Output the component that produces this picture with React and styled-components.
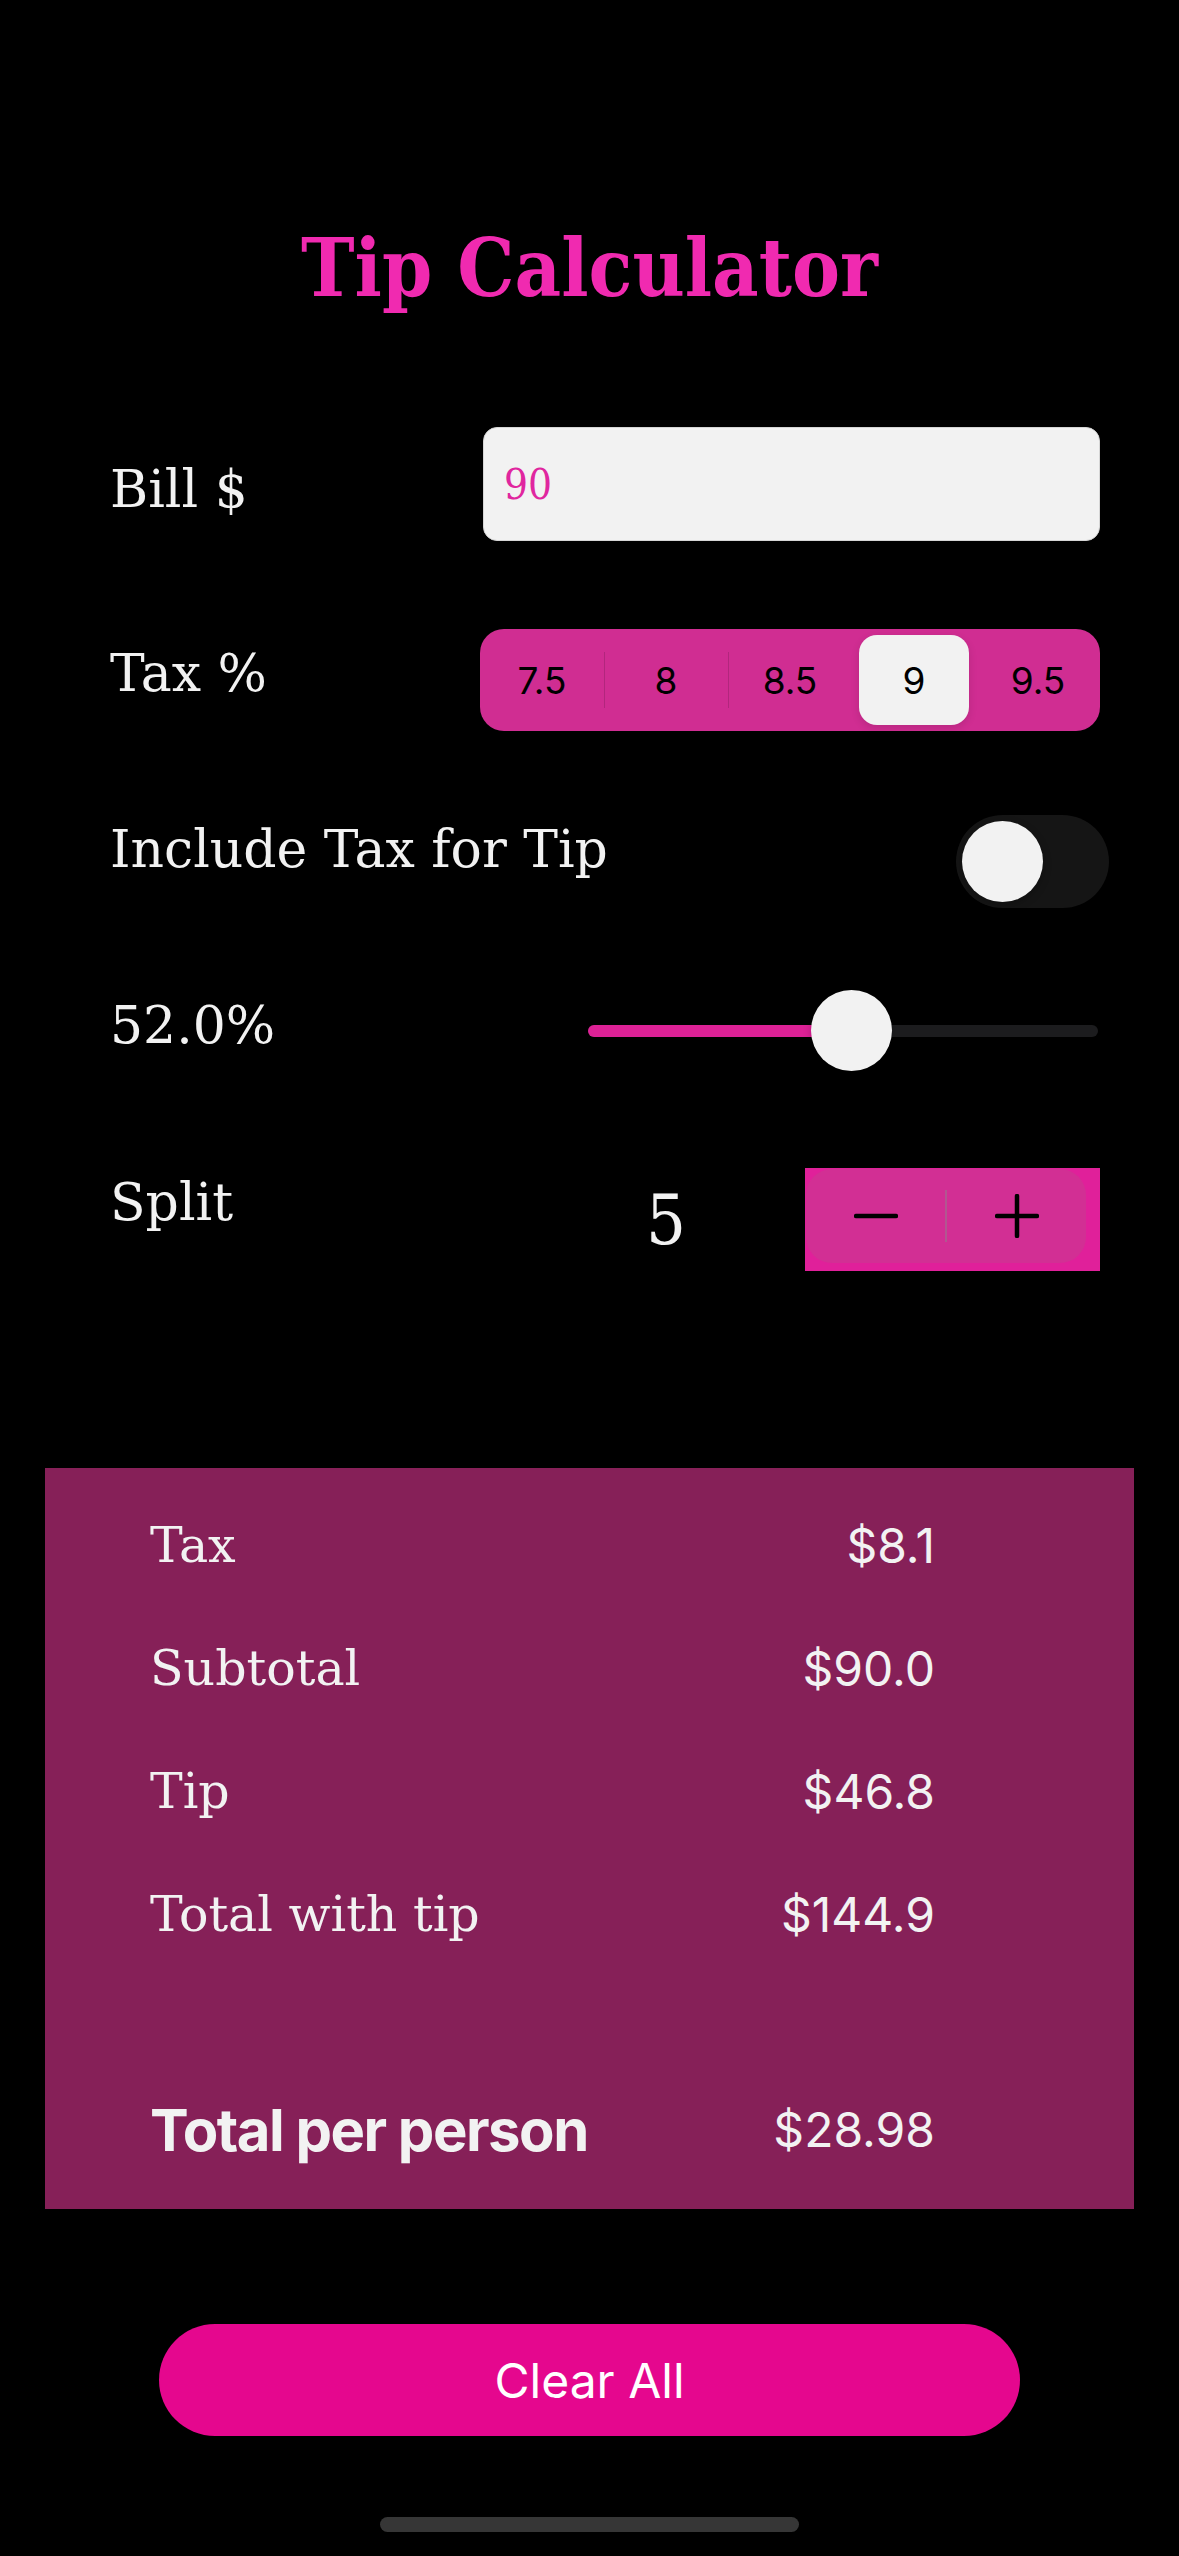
import React from "react";
import styled, { createGlobalStyle } from "styled-components";

const GlobalStyle = createGlobalStyle`
  html, body { margin: 0; padding: 0; background: #000; }
  #root { width: 1179px; min-height: 2556px; }
  * { box-sizing: border-box; }
`;

const TITLE_SERIF = `"DejaVu Serif Condensed", "DejaVu Serif", serif`;
const SERIF = `"DejaVu Serif", serif`;
const SANS = `Inter, "Noto Sans", sans-serif`;

const Page = styled.div`
  display: flex;
  flex-direction: column;
  width: 1179px;
  min-height: 2556px;
  background: #000;
`;

const Title = styled.h1`
  margin: 218px 0 0;
  font-family: ${TITLE_SERIF};
  font-stretch: condensed;
  font-weight: 700;
  font-size: 80px;
  line-height: 100px;
  color: #f02ab0;
  text-align: center;
`;

const Form = styled.div`
  display: flex;
  flex-direction: column;
  padding: 0 79px 0 110px;
`;

const Row = styled.div`
  display: flex;
  align-items: center;
  justify-content: space-between;
  height: ${(p) => p.$h}px;
  margin-top: ${(p) => p.$mt}px;
`;

const Label = styled.div`
  font-family: ${SERIF};
  font-size: 52px;
  line-height: 64px;
  color: #f2f2f2;
  padding-top: ${(p) => (p.$nudge > 0 ? p.$nudge * 2 : 0)}px;
  padding-bottom: ${(p) => (p.$nudge < 0 ? -p.$nudge * 2 : 0)}px;
`;

const BillInput = styled.input`
  width: 617px;
  height: 114px;
  border: 1px solid #d6d6d6;
  border-radius: 14px;
  background: #f2f2f2;
  padding: 0 0 0 20px;
  font-family: ${TITLE_SERIF};
  font-stretch: condensed;
  font-size: 42px;
  color: #e0269f;
  outline: none;
`;

const Segmented = styled.div`
  display: flex;
  width: 620px;
  height: 102px;
  border-radius: 24px;
  background: #d02d92;
`;

const Segment = styled.div`
  position: relative;
  flex: 1;
  display: flex;
  padding: 6px 7px;
  &::before {
    content: "";
    display: ${(p) => (p.$divider ? "block" : "none")};
    position: absolute;
    left: 0;
    top: 23px;
    bottom: 23px;
    width: 1px;
    background: rgba(0, 0, 0, 0.14);
  }
`;

const SegPill = styled.div`
  flex: 1;
  display: flex;
  align-items: center;
  justify-content: center;
  border-radius: 18px;
  background: ${(p) => (p.$active ? "#f2f2f2" : "transparent")};
  box-shadow: ${(p) => (p.$active ? "0 3px 8px rgba(0,0,0,0.12)" : "none")};
  font-family: ${SANS};
  font-size: 37px;
  color: #000;
`;

const Toggle = styled.div`
  display: flex;
  align-items: center;
  width: 153px;
  height: 93px;
  margin-right: -9px;
  border-radius: 47px;
  background: #151515;
  padding-left: 6px;
`;

const Knob = styled.div`
  width: 81px;
  height: 81px;
  border-radius: 50%;
  background: #f2f2f2;
  box-shadow: 0 3px 8px rgba(0, 0, 0, 0.25);
`;

const Slider = styled.div`
  position: relative;
  display: flex;
  align-items: center;
  width: 510px;
  height: 81px;
  margin-right: 2px;
`;

const Track = styled.div`
  flex: 1;
  height: 12px;
  border-radius: 6px;
  background: #1c1c1e;
  overflow: hidden;
`;

const Fill = styled.div`
  height: 100%;
  background: #dd2196;
`;

const Thumb = styled.div`
  position: absolute;
  top: 0;
  width: 81px;
  height: 81px;
  border-radius: 50%;
  background: #f2f2f2;
  box-shadow: 0 3px 8px rgba(0, 0, 0, 0.2);
`;

const SplitControls = styled.div`
  display: flex;
  align-items: center;
  gap: 119px;
`;

const SplitValue = styled.div`
  font-family: ${TITLE_SERIF};
  font-stretch: condensed;
  font-size: 70px;
  line-height: 80px;
  color: #f2f2f2;
`;

const Stepper = styled.div`
  display: flex;
  width: 295px;
  height: 103px;
  padding: 1px 14px 8px 1px;
  background: #e0209a;
`;

const StepperInner = styled.div`
  flex: 1;
  display: flex;
  align-items: center;
  border-radius: 26px;
  background: #d22f94;
`;

const StepButton = styled.div`
  flex: 1;
  display: flex;
  align-items: center;
  justify-content: center;
  height: 100%;
`;

const StepDivider = styled.div`
  width: 2px;
  height: 52px;
  background: rgba(150, 120, 140, 0.55);
`;

const Panel = styled.div`
  display: flex;
  flex-direction: column;
  margin: 197px 45px 0;
  height: 741px;
  padding: 16px 199px 18px 105px;
  background: #862058;
`;

const ResultRow = styled.div`
  display: flex;
  align-items: center;
  justify-content: space-between;
  height: 123px;
  margin-top: ${(p) => p.$mt || 0}px;
`;

const ResultLabel = styled.div`
  font-family: ${SERIF};
  font-size: 49px;
  line-height: 60px;
  color: #f2f2f2;
`;

const TotalLabel = styled.div`
  font-family: ${SANS};
  font-weight: 700;
  font-size: 58px;
  line-height: 60px;
  letter-spacing: -1.5px;
  color: #f2f2f2;
`;

const ResultValue = styled.div`
  font-family: ${SANS};
  font-size: 48px;
  line-height: 60px;
  color: #f2f2f2;
  text-align: right;
`;

const ClearButton = styled.button`
  align-self: center;
  margin-top: 115px;
  width: 861px;
  height: 112px;
  border: none;
  border-radius: 56px;
  background: #e5078e;
  color: #fff;
  font-family: ${SANS};
  font-size: 48px;
`;

const HomeIndicator = styled.div`
  align-self: center;
  margin-top: 81px;
  width: 419px;
  height: 15px;
  border-radius: 8px;
  background: #363636;
`;

const MinusIcon = () => (
  <svg width="44" height="44" viewBox="0 0 44 44">
    <line x1="2" y1="22" x2="42" y2="22" stroke="#000" strokeWidth="4.5" strokeLinecap="round" />
  </svg>
);

const PlusIcon = () => (
  <svg width="44" height="44" viewBox="0 0 44 44">
    <line x1="2" y1="22" x2="42" y2="22" stroke="#000" strokeWidth="4.5" strokeLinecap="round" />
    <line x1="22" y1="2" x2="22" y2="42" stroke="#000" strokeWidth="4.5" strokeLinecap="round" />
  </svg>
);

const taxes = ["7.5", "8", "8.5", "9", "9.5"];
const selectedTax = 3;
const tipPercent = 52;

const results = [
  ["Tax", "$8.1"],
  ["Subtotal", "$90.0"],
  ["Tip", "$46.8"],
  ["Total with tip", "$144.9"],
];

export default function App() {
  const sliderW = 510;
  const thumb = 81;
  const thumbLeft = ((sliderW - thumb) * tipPercent) / 100;
  return (
    <Page>
      <GlobalStyle />
      <Title>Tip Calculator</Title>
      <Form>
        <Row $h={114} $mt={109}>
          <Label $nudge={5}>Bill $</Label>
          <BillInput defaultValue="90" />
        </Row>
        <Row $h={102} $mt={88}>
          <Label $nudge={-7}>Tax %</Label>
          <Segmented>
            {taxes.map((t, i) => (
              <Segment
                key={t}
                $divider={i > 0 && i !== selectedTax && i - 1 !== selectedTax}
              >
                <SegPill $active={i === selectedTax}>{t}</SegPill>
              </Segment>
            ))}
          </Segmented>
        </Row>
        <Row $h={93} $mt={84}>
          <Label $nudge={-13}>Include Tax for Tip</Label>
          <Toggle>
            <Knob />
          </Toggle>
        </Row>
        <Row $h={81} $mt={82}>
          <Label $nudge={-6}>{tipPercent.toFixed(1)}%</Label>
          <Slider>
            <Track>
              <Fill style={{ width: thumbLeft + thumb / 2 }} />
            </Track>
            <Thumb style={{ left: thumbLeft }} />
          </Slider>
        </Row>
        <Row $h={103} $mt={97}>
          <Label $nudge={-18}>Split</Label>
          <SplitControls>
            <SplitValue>5</SplitValue>
            <Stepper>
              <StepperInner>
                <StepButton>
                  <MinusIcon />
                </StepButton>
                <StepDivider />
                <StepButton>
                  <PlusIcon />
                </StepButton>
              </StepperInner>
            </Stepper>
          </SplitControls>
        </Row>
      </Form>
      <Panel>
        {results.map(([l, v]) => (
          <ResultRow key={l}>
            <ResultLabel>{l}</ResultLabel>
            <ResultValue>{v}</ResultValue>
          </ResultRow>
        ))}
        <ResultRow $mt={92}>
          <TotalLabel>Total per person</TotalLabel>
          <ResultValue>$28.98</ResultValue>
        </ResultRow>
      </Panel>
      <ClearButton>Clear All</ClearButton>
      <HomeIndicator />
    </Page>
  );
}
